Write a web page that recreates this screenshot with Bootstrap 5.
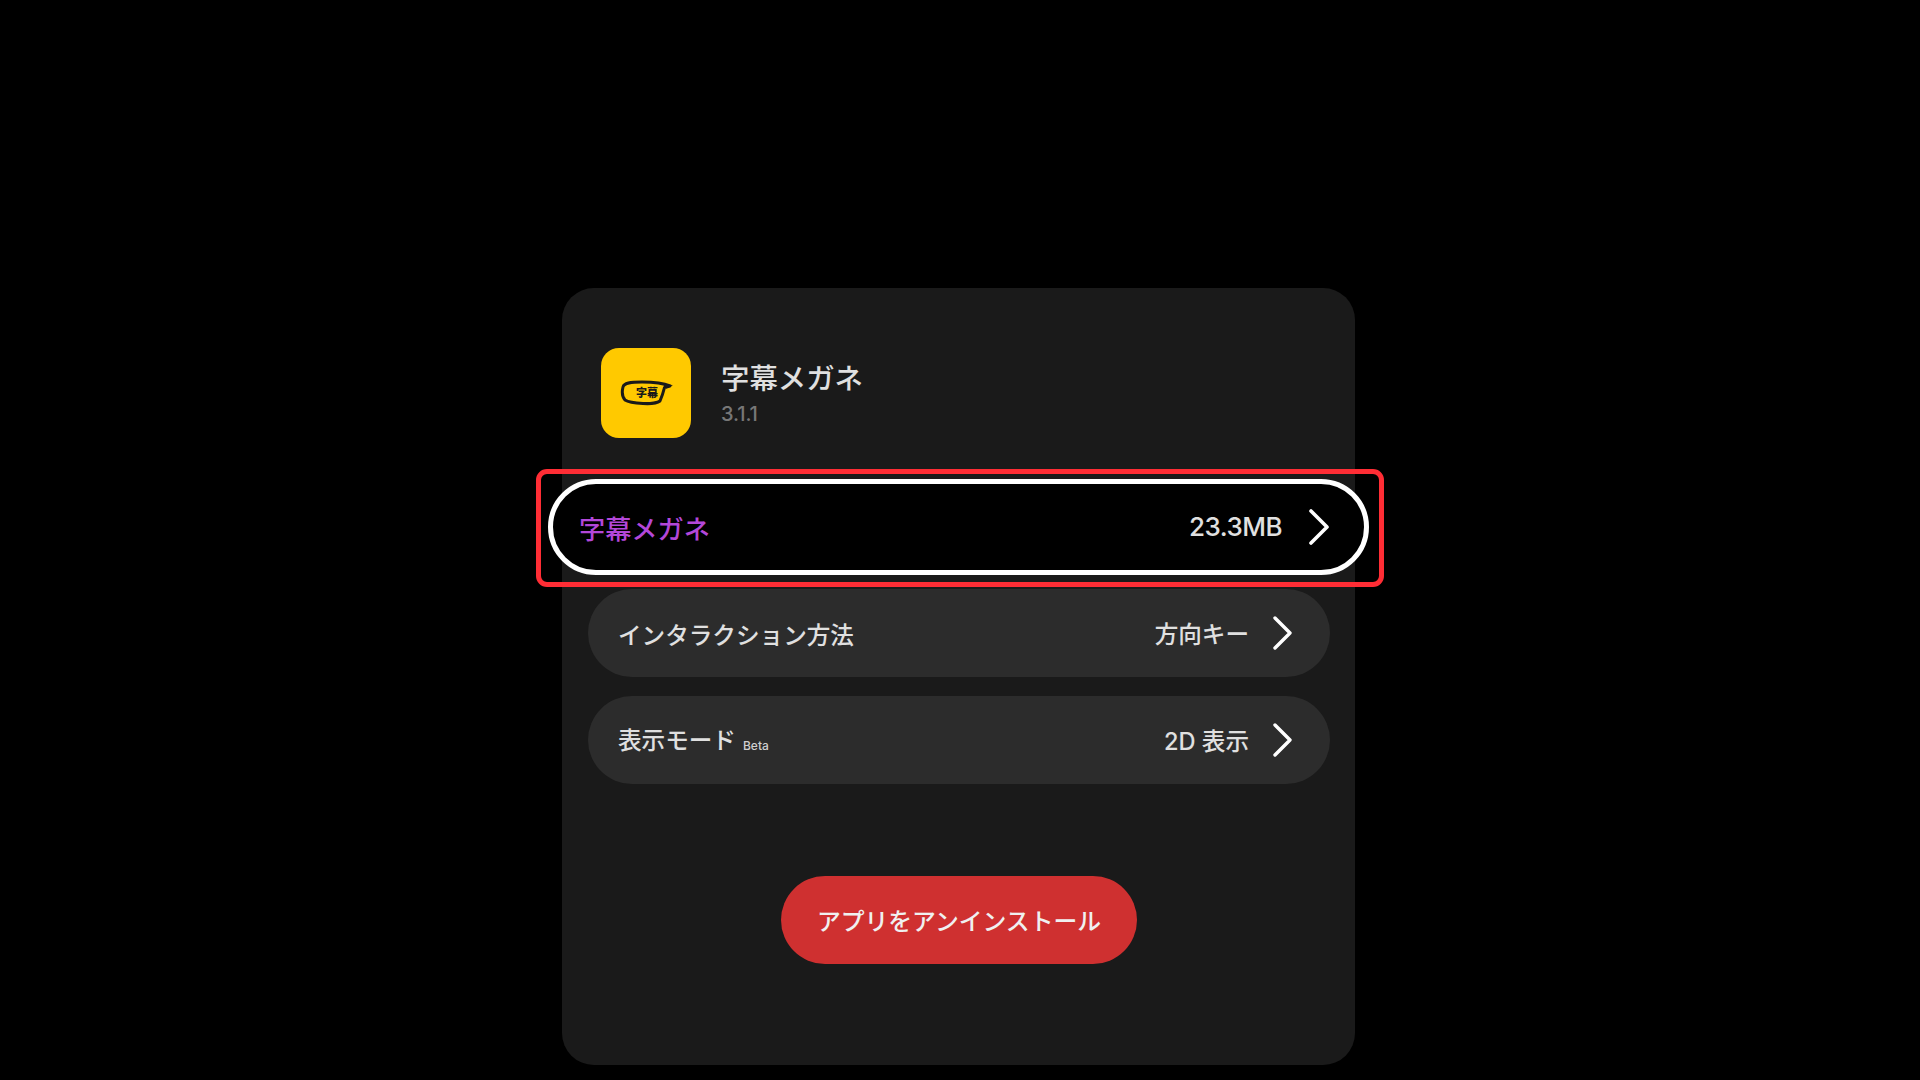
<!doctype html>
<html lang="ja">
<head>
<meta charset="utf-8">
<title>字幕メガネ</title>
<link href="https://cdn.jsdelivr.net/npm/bootstrap@5.3.0/dist/css/bootstrap.min.css" rel="stylesheet">
<style>
html,body{height:100%;}
body{background:#000;font-family:"Inter","Noto Sans CJK JP",sans-serif;overflow:hidden;color:#e8e8e8;}
.stage{height:1080px;padding:288px 0 0 562px;}
.panel{width:793px;height:777px;background:#1a1a1a;border-radius:32px;padding:60px 25px 0 26px;}
.head-row{padding-left:13px;gap:30px;margin-bottom:41px;}
.app-logo{width:90px;height:90px;background:#ffc900;border-radius:18px;position:relative;}
.app-logo svg{width:54px;height:26px;margin-left:2px;}
.logo-text{position:absolute;left:35px;top:36px;font-size:11px;line-height:17px;font-weight:900;color:#1a1a1a;font-family:"Noto Sans CJK JP",sans-serif;}
.name-block{padding-top:12px;}
.app-name{font-size:28.4px;line-height:34px;font-weight:500;color:#e0e0e0;font-family:"Noto Sans CJK JP",sans-serif;}
.app-ver{font-size:20px;line-height:24px;color:#777;margin-top:8px;font-weight:500;letter-spacing:-.1px;}
.focus-wrap{position:relative;margin:0 -39px 14px -40px;}
.focus-frame{position:absolute;top:-10px;bottom:-12px;left:-12px;right:-15px;border:5px solid #ff2d35;border-radius:11px;pointer-events:none;}
.opt-row{height:88px;border-radius:44px;background:#2c2c2c;padding:0 37px 0 30px;}
.opt-row+.opt-row{margin-top:19px;}
.opt-focus{height:96px;border-radius:48px;background:#000;border:5px solid #fff;padding:0 34px 0 26px;}
.opt-label{font-size:23.6px;line-height:30px;font-weight:500;color:#e0e0e0;font-family:"Noto Sans CJK JP",sans-serif;margin-top:2px;}
.mode-row .opt-label{margin-top:4px;}
.opt-focus .opt-label{font-size:26.2px;color:#b347d9;margin-top:2px;}
.opt-value{font-size:23.6px;line-height:30px;font-weight:500;color:#e0e0e0;margin-right:23px;margin-top:3px;font-family:"Inter","Noto Sans CJK JP",sans-serif;}
.opt-focus .opt-value{font-size:26px;letter-spacing:-.5px;margin-right:26px;margin-top:0;}
.beta-tag{font-size:12px;font-weight:500;color:#cfcfcf;margin-left:7px;font-family:"Inter",sans-serif;position:relative;top:1px;}
.chev{width:21px;height:34px;}
.opt-focus .chev{width:22px;height:36px;}
.uninstall{width:356px;height:88px;margin:92px auto 0;background:#cf3030;border:0;border-radius:44px;color:#f0f0f0;font-size:23.8px;font-weight:500;font-family:"Noto Sans CJK JP",sans-serif;padding:0;}
.uninstall:hover,.uninstall:active{background:#cf3030!important;color:#f0f0f0!important;}
</style>
</head>
<body>
<div class="stage">
  <div class="panel">
    <div class="d-flex align-items-start head-row">
      <div class="app-logo flex-shrink-0 d-flex align-items-center justify-content-center">
        <svg viewBox="0 0 54 26" aria-hidden="true"><path d="M3 7C4 3 10 2 22 2c11 0 21 1 28 4l-5.500 1.500c-1.500 6-3 10-4.500 13.500-2 1.500-9 3-17 2.500-9-.500-15-1.500-18-3.500C1.500 16 2 11 3 7z" fill="none" stroke="#1a1a1a" stroke-width="3" stroke-linejoin="round"/><path d="M43 4.500l10 .500-6.500 3.500z" fill="#1a1a1a"/></svg>
        <span class="logo-text">字幕</span>
      </div>
      <div class="name-block">
        <div class="app-name">字幕メガネ</div>
        <div class="app-ver">3.1.1</div>
      </div>
    </div>

    <div class="focus-wrap">
      <div class="opt-row opt-focus d-flex align-items-center justify-content-between">
        <span class="opt-label">字幕メガネ</span>
        <div class="d-flex align-items-center">
          <span class="opt-value">23.3MB</span>
          <svg class="chev" viewBox="0 0 22 36" aria-hidden="true"><path d="M3 2l16 16L3 34" fill="none" stroke="#fff" stroke-width="3.600" stroke-linecap="round" stroke-linejoin="round"/></svg>
        </div>
      </div>
      <div class="focus-frame"></div>
    </div>

    <div class="opt-row d-flex align-items-center justify-content-between">
      <span class="opt-label">インタラクション方法</span>
      <div class="d-flex align-items-center">
        <span class="opt-value">方向キー</span>
        <svg class="chev" viewBox="0 0 21 34" aria-hidden="true"><path d="M3 2l15 15L3 32" fill="none" stroke="#fff" stroke-width="3.400" stroke-linecap="round" stroke-linejoin="round"/></svg>
      </div>
    </div>
    <div class="opt-row mode-row d-flex align-items-center justify-content-between">
      <span class="opt-label">表示モード<span class="beta-tag">Beta</span></span>
      <div class="d-flex align-items-center">
        <span class="opt-value">2D 表示</span>
        <svg class="chev" viewBox="0 0 21 34" aria-hidden="true"><path d="M3 2l15 15L3 32" fill="none" stroke="#fff" stroke-width="3.400" stroke-linecap="round" stroke-linejoin="round"/></svg>
      </div>
    </div>

    <button type="button" class="btn uninstall d-block">アプリをアンインストール</button>
  </div>
</div>
<script src="https://cdn.jsdelivr.net/npm/bootstrap@5.3.0/dist/js/bootstrap.bundle.min.js"></script>
</body>
</html>
